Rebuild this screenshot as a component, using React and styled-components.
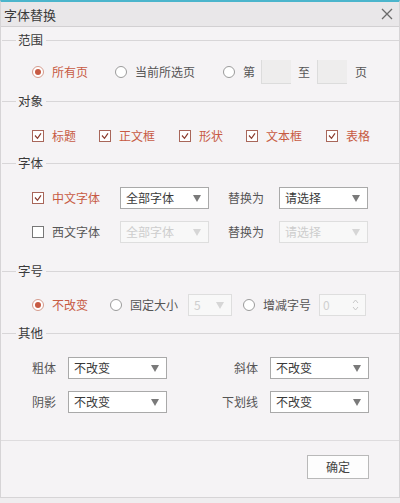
import React from "react";
import styled, { createGlobalStyle } from "styled-components";

const GlobalStyle = createGlobalStyle`
  body {
    margin: 0;
    background: #efedef;
    font-family: "Noto Sans CJK SC", "Noto Sans", sans-serif;
  }
`;

const RED = "#c75a43";

const Radio = ({ on }) => (
  <svg width="12" height="12" viewBox="0 0 12 12">
    <circle cx="6" cy="6" r="5.5" fill="#fff" stroke={on ? "#d49a8c" : "#9a9a9a"} />
    {on && <circle cx="6" cy="6" r="3" fill={RED} />}
  </svg>
);

const Check = ({ on }) => (
  <svg width="12" height="12" viewBox="0 0 12 12">
    <rect x="0.5" y="0.5" width="11" height="11" fill="#fff" stroke={on ? "#a8665a" : "#777"} />
    {on && <polyline points="3,5.5 5.5,8.3 9,3.3" fill="none" stroke="#8a3a2c" strokeWidth="1.2" />}
  </svg>
);

const Close = () => (
  <svg width="12" height="12" viewBox="0 0 12 12">
    <path d="M1 1 L11 11 M11 1 L1 11" stroke="#6a6a6a" strokeWidth="1.3" />
  </svg>
);

const Select = ({ value, width, disabled, ml }) => (
  <SelectBox $w={width} $ml={ml} $disabled={disabled}>
    <span>{value}</span>
    <Arrow $disabled={disabled} />
  </SelectBox>
);

export default function App() {
  return (
    <>
      <GlobalStyle />
      <Dialog>
        <TitleBar>
          <Title>字体替换</Title>
          <Close />
        </TitleBar>
        <Body>
          <Legend $mt={2}>范围</Legend>
          <Row $mt={6}>
            <Option $on><Radio on />所有页</Option>
            <Option $ml={27}><Radio />当前所选页</Option>
            <Option $ml={28}><Radio />第</Option>
            <PageBox $ml={6} />
            <Text $ml={7}>至</Text>
            <PageBox $ml={7} />
            <Text $ml={8}>页</Text>
          </Row>

          <Legend $mt={3}>对象</Legend>
          <Row $mt={9}>
            <Option $on><Check on />标题</Option>
            <Option $on $ml={23}><Check on />正文框</Option>
            <Option $on $ml={24}><Check on />形状</Option>
            <Option $on $ml={23}><Check on />文本框</Option>
            <Option $on $ml={24}><Check on />表格</Option>
          </Row>

          <Legend $mt={1}>字体</Legend>
          <Row $mt={9}>
            <Option $on><Check on />中文字体</Option>
            <Select value="全部字体" width={89} ml={20} />
            <Text $ml={19}>替换为</Text>
            <Select value="请选择" width={89} ml={15} />
          </Row>
          <Row $mt={4}>
            <Option><Check />西文字体</Option>
            <Select value="全部字体" width={89} ml={20} disabled />
            <Text $ml={19}>替换为</Text>
            <Select value="请选择" width={89} ml={15} disabled />
          </Row>

          <Legend $mt={13}>字号</Legend>
          <Row $mt={8}>
            <Option $on><Radio on />不改变</Option>
            <Option $ml={22}><Radio />固定大小</Option>
            <Select value="5" width={44} ml={10} disabled />
            <Option $ml={11}><Radio />增减字号</Option>
            <Spin>
              <span>0</span>
              <svg width="7" height="14" viewBox="0 0 7 14">
                <path d="M1 5 L3.5 2 L6 5 M1 9 L3.5 12 L6 9" fill="none" stroke="#c8c8c8" />
              </svg>
            </Spin>
          </Row>

          <Legend $mt={2}>其他</Legend>
          <PairRow $mt={9}>
            <Pair><Text>粗体</Text><Select value="不改变" width={99} /></Pair>
            <Pair><Text>斜体</Text><Select value="不改变" width={99} /></Pair>
          </PairRow>
          <PairRow $mt={4}>
            <Pair><Text>阴影</Text><Select value="不改变" width={99} /></Pair>
            <Pair><Text>下划线</Text><Select value="不改变" width={99} /></Pair>
          </PairRow>
        </Body>
        <Footer>
          <Button>确定</Button>
        </Footer>
      </Dialog>
    </>
  );
}

const Dialog = styled.div`
  width: 400px;
  height: 498px;
  box-sizing: border-box;
  display: flex;
  flex-direction: column;
  background: #f5f3f5;
  border-top: 2px solid #4bb5cc;
  border-left: 1px solid #d6d4d6;
  border-right: 1px solid #d6d4d6;
  border-bottom: 1px solid #d6d4d6;
  color: #555;
`;

const TitleBar = styled.div`
  height: 24px;
  display: flex;
  align-items: center;
  justify-content: space-between;
  padding: 0 6px 0 3px;
  background: #e9e7e9;
  border-bottom: 1px solid #d2d0d2;
`;

const Title = styled.div`
  font-size: 13px;
  line-height: 1;
  color: #3a3a3a;
`;

const Body = styled.div`
  flex: 1;
  display: flex;
  flex-direction: column;
  padding-left: 1px;
`;

const Legend = styled.div`
  display: flex;
  align-items: center;
  height: 22px;
  margin-top: ${(p) => p.$mt || 0}px;
  font-size: 12.5px;
  line-height: 1;
  color: #3a3a3a;
  &::before {
    content: "";
    width: 14px;
    border-top: 1px solid #d8d6d8;
    margin-right: 2px;
  }
  &::after {
    content: "";
    flex: 1;
    border-top: 1px solid #d8d6d8;
    margin-left: 3px;
  }
`;

const Row = styled.div`
  display: flex;
  align-items: center;
  height: 30px;
  margin-top: ${(p) => p.$mt || 0}px;
  padding-left: 30px;
  font-size: 12px;
  line-height: 1;
`;

const PairRow = styled(Row)`
  justify-content: space-between;
  padding-right: 30px;
`;

const Pair = styled.div`
  display: flex;
  align-items: center;
  gap: 12px;
`;

const Option = styled.label`
  display: flex;
  align-items: center;
  gap: 8px;
  margin-left: ${(p) => p.$ml || 0}px;
  color: ${(p) => (p.$on ? RED : "#555")};
  white-space: nowrap;
`;

const Text = styled.span`
  margin-left: ${(p) => p.$ml || 0}px;
  color: #555;
  white-space: nowrap;
`;

const PageBox = styled.div`
  width: 29px;
  height: 23px;
  margin-left: ${(p) => p.$ml || 0}px;
  background: #eeeded;
  border-left: 1px solid #dcdcdc;
  border-bottom: 1px solid #dcdcdc;
`;

const SelectBox = styled.div`
  position: relative;
  box-sizing: border-box;
  width: ${(p) => p.$w}px;
  height: 22px;
  margin-left: ${(p) => p.$ml || 0}px;
  display: flex;
  align-items: center;
  padding-left: 5px;
  background: ${(p) => (p.$disabled ? "#f8f8f8" : "#fff")};
  border: 1px solid ${(p) => (p.$disabled ? "#dedede" : "#a9a9a9")};
  color: ${(p) => (p.$disabled ? "#cdcdcd" : "#3a3a3a")};
`;

const Arrow = styled.span`
  position: absolute;
  right: 7px;
  top: 7px;
  width: 0;
  height: 0;
  border-left: 4px solid transparent;
  border-right: 4px solid transparent;
  border-top: 7px solid ${(p) => (p.$disabled ? "#d6d6d6" : "#7a7a7a")};
`;

const Spin = styled.div`
  box-sizing: border-box;
  width: 47px;
  height: 22px;
  margin-left: 8px;
  display: flex;
  align-items: center;
  justify-content: space-between;
  padding: 0 6px 0 3px;
  background: #f8f8f8;
  border: 1px solid #dedede;
  color: #d0d0d0;
`;

const Footer = styled.div`
  box-sizing: border-box;
  height: 57px;
  border-top: 1px solid #dedcde;
  display: flex;
  justify-content: flex-end;
  align-items: flex-start;
  padding: 14px 30px 0 0;
`;

const Button = styled.button`
  width: 62px;
  height: 24px;
  padding: 0;
  background: #fdfdfd;
  border: 1px solid #b9b9b9;
  border-radius: 0;
  font-family: inherit;
  font-size: 12px;
  line-height: 1;
  color: #444;
`;
